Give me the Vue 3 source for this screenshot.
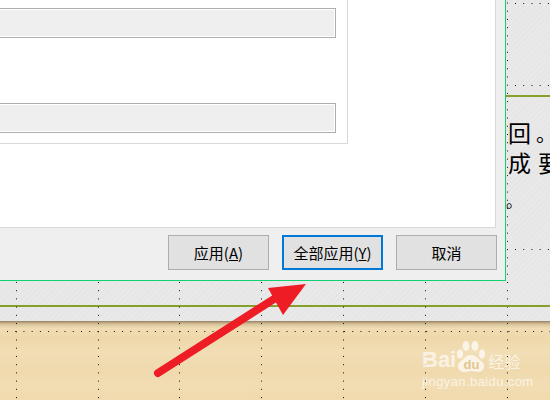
<template>
  <div class="stage">
    <!-- print-layout grid dots behind the dialog -->
    <svg class="dots" width="550" height="400">
      <line v-for="x in dotCols" :key="x" :x1="x" y1="2.5" :x2="x" y2="400" class="dot-line" />
      <line v-for="row in dotRows" :key="row.y" :x1="row.x" :y1="row.y" x2="550" :y2="row.y" class="dot-line" />
    </svg>

    <div class="paper">
      <div class="left">
        <div class="dialog">
          <div class="dialog-body">
            <div class="panel">
              <div class="field"></div>
              <div class="field second"></div>
            </div>
          </div>
          <div class="dialog-footer">
            <button class="btn">应用(<u>A</u>)</button>
            <button class="btn active">全部应用(<u>Y</u>)</button>
            <button class="btn">取消</button>
          </div>
        </div>
        <div class="rule bottom-rule"></div>
      </div>
      <div class="side">
        <div class="rule"></div>
        <div class="note first">回<span class="stop">。</span></div>
        <div class="note">成<span class="gap">要</span></div>
        <div class="small-stop">。</div>
        <div class="rule side-bottom"></div>
      </div>
    </div>
    <div class="wood"></div>

    <svg class="arrow" width="550" height="400">
      <line x1="158" y1="373" x2="285" y2="292" class="shaft" />
      <polygon points="306,284 268,288 283,315" fill="#ee1c25" />
    </svg>

    <div class="watermark">
      <div class="logo">
        <span class="bai">Bai</span>
        <svg width="32" height="36" viewBox="0 0 32 36">
          <ellipse cx="4" cy="15" rx="3" ry="4.5" />
          <ellipse cx="10" cy="7" rx="3.5" ry="5" />
          <ellipse cx="19" cy="7" rx="3.5" ry="5" />
          <ellipse cx="26" cy="15" rx="3" ry="4.5" />
          <path d="M15 16c5 0 6 3 10 6 5 3 4 11-3 11-3 0-5-1-7-1s-4 1-7 1c-7 0-8-8-3-11 4-3 5-6 10-6z" />
          <text x="15.5" y="30" class="du">du</text>
        </svg>
        <span class="jingyan">经验</span>
      </div>
      <div class="url">jingyan.baidu.com</div>
    </div>
  </div>
</template>

<script setup>
const dotCols = [16.5, 98.5, 179.5, 261.5, 343.5, 425.5, 507.5]
const dotRows = [
  { x: 515, y: 3.5 },
  { x: 515, y: 85.5 },
  { x: 515, y: 249.5 },
  { x: 7, y: 331.5 }
]
</script>

<style>
html, body {
  margin: 0;
  background: #e8e8e8;
}
</style>

<style scoped>
.stage {
  position: relative;
  width: 550px;
  height: 400px;
  overflow: hidden;
  display: flex;
  flex-direction: column;
  font-family: "Noto Sans CJK SC", "Liberation Sans", sans-serif;
  background: #e8e8e8;
}

.dots {
  position: absolute;
  left: 0;
  top: 0;
  z-index: 1;
}

.dot-line {
  stroke: #111;
  stroke-width: 1;
  stroke-dasharray: 1 7.22;
}

.paper {
  height: 321px;
  display: flex;
  flex: none;
  background: repeating-linear-gradient(135deg, #e9e9e9 0, #e9e9e9 2px, #e6e6e6 2px, #e6e6e6 4px);
}

.left {
  width: 506px;
  display: flex;
  flex-direction: column;
}

.dialog {
  position: relative;
  z-index: 2;
  box-sizing: border-box;
  width: 506px;
  height: 281px;
  display: flex;
  flex-direction: column;
  background: #efefef;
  border-right: 1px solid #10d070;
  border-bottom: 1px solid #10d070;
}

.dialog-body {
  box-sizing: border-box;
  width: 496px;
  height: 228px;
  background: #fff;
  border-right: 1px solid #d9d9d9;
  border-bottom: 1px solid #d9d9d9;
}

.panel {
  box-sizing: border-box;
  width: 348px;
  height: 144px;
  padding-top: 8px;
  border-right: 1px solid #d9d9d9;
  border-bottom: 1px solid #d9d9d9;
  overflow: hidden;
}

.field {
  box-sizing: border-box;
  width: 338px;
  height: 30px;
  margin-left: -2px;
  background: #efefef;
  border: 1px solid #adadad;
  box-shadow: inset 0 0 0 1px #fff;
}

.second {
  margin-top: 65px;
}

.dialog-footer {
  display: flex;
  justify-content: flex-end;
  gap: 13px;
  padding: 7px 8px 0 0;
}

.btn {
  box-sizing: border-box;
  width: 101px;
  height: 35px;
  padding: 0;
  font-family: inherit;
  font-size: 15px;
  color: #000;
  background: #e1e1e1;
  border: 1px solid #adadad;
}

.btn.active {
  border: 2px solid #0078d7;
}

.rule {
  height: 2px;
  background: #86a02c;
}

.bottom-rule {
  margin-top: 24px;
}

.side {
  flex: 1;
  position: relative;
  z-index: 2;
  display: flex;
  flex-direction: column;
  padding-top: 95px;
  overflow: hidden;
}

.note {
  padding-left: 2px;
  font-size: 23px;
  line-height: 28px;
  white-space: nowrap;
  color: #000;
}

.first {
  margin-top: 21px;
}

.stop {
  font-size: 20px;
  margin-left: 5px;
}

.gap {
  margin-left: 7px;
}

.small-stop {
  height: 20px;
  margin-top: 14px;
  font-size: 16px;
  line-height: 20px;
  color: #000;
}

.side-bottom {
  margin-top: auto;
  margin-bottom: 14px;
}

.wood {
  flex: 1;
  background:
    linear-gradient(180deg, rgba(110, 90, 60, 0.7) 0, rgba(150, 125, 85, 0.3) 3px, rgba(150, 125, 85, 0) 7px),
    linear-gradient(180deg, #f2dfb8 0, #eed8ab 22%, #f2deb6 40%, #efd9ad 62%, #f2ddb3 80%, #f0daae 100%);
}

.arrow {
  position: absolute;
  left: 0;
  top: 0;
  z-index: 3;
}

.shaft {
  stroke: #ee1c25;
  stroke-width: 8;
  stroke-linecap: round;
}

.watermark {
  position: absolute;
  left: 422px;
  top: 339px;
  z-index: 3;
  color: rgba(255, 255, 255, 0.68);
}

.logo {
  display: flex;
  align-items: flex-end;
  height: 36px;
}

.logo svg {
  flex: none;
  fill: rgba(255, 255, 255, 0.68);
}

.bai {
  font-family: "Liberation Sans", sans-serif;
  font-size: 22px;
  font-weight: 700;
  line-height: 30px;
}

.du {
  font-family: "Liberation Sans", sans-serif;
  font-size: 13px;
  font-weight: 700;
  text-anchor: middle;
  fill: #e3c68f;
}

.jingyan {
  font-size: 16px;
  line-height: 28px;
}

.url {
  font-family: "Liberation Sans", sans-serif;
  font-size: 13px;
  line-height: 14px;
  letter-spacing: 0.4px;
  white-space: nowrap;
}
</style>
